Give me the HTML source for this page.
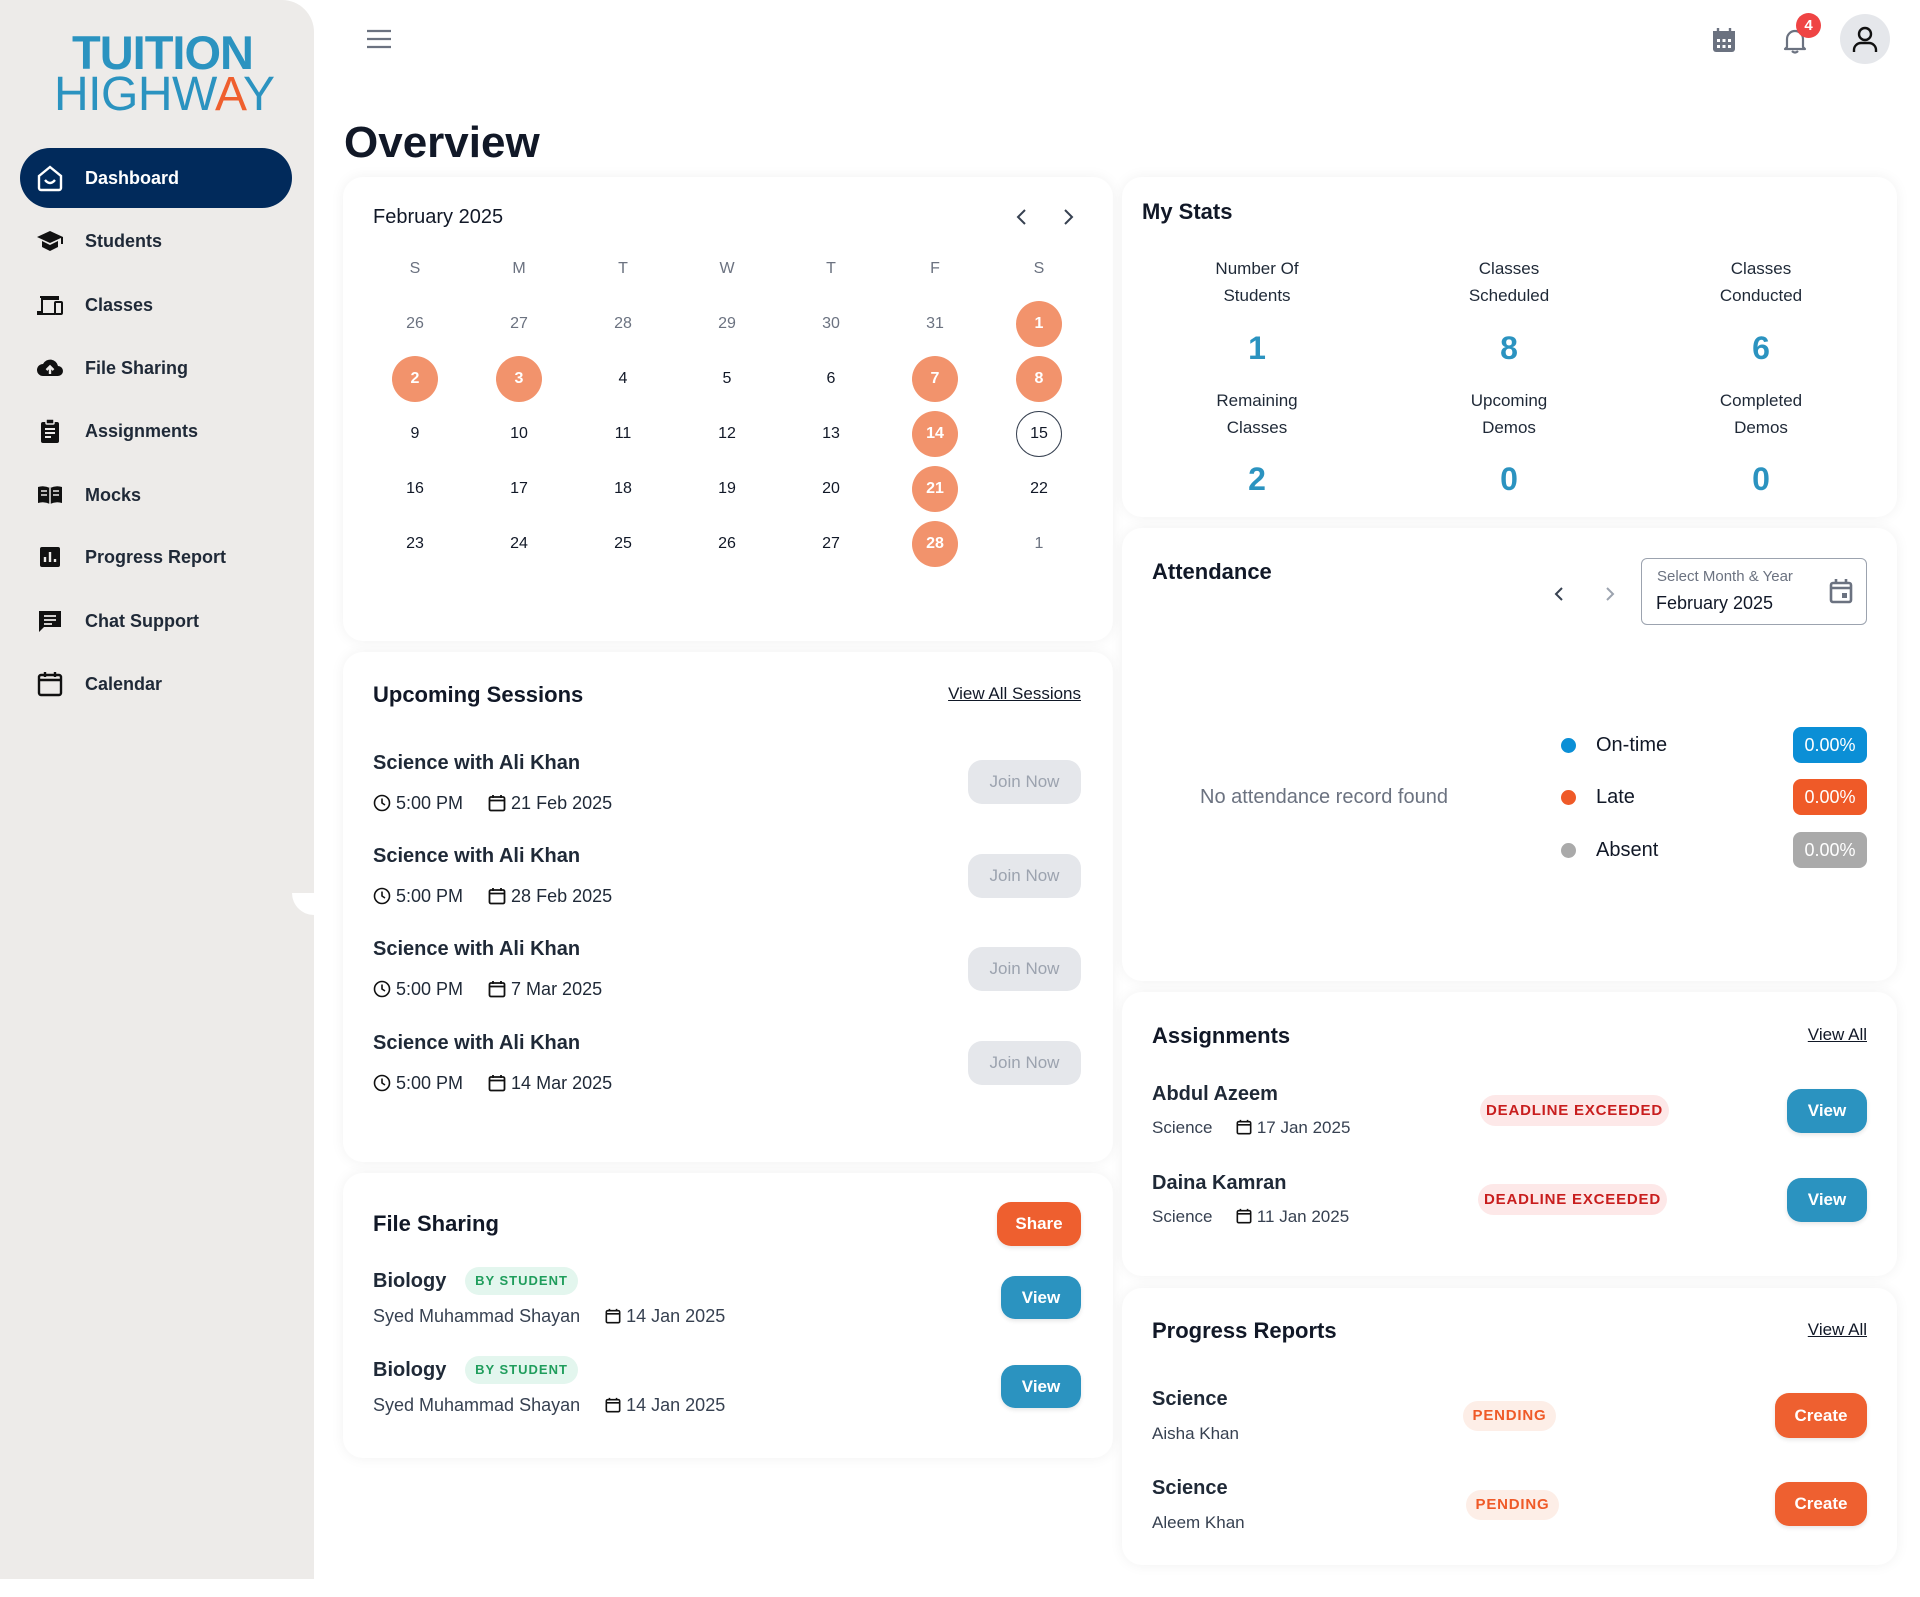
<!DOCTYPE html>
<html><head><meta charset="utf-8"><style>
*{margin:0;padding:0;box-sizing:border-box}
body{width:1920px;height:1597px;background:#fff;font-family:"Liberation Sans",sans-serif;color:#1f2937;position:relative;overflow:hidden}
.a{position:absolute;white-space:nowrap}
.card{position:absolute;background:#fff;border-radius:20px;box-shadow:0 0 14px rgba(0,0,0,0.06)}
.nav{position:absolute;left:85px;font-size:18px;font-weight:bold;color:#1f2937;line-height:24px}
.ni{position:absolute;left:36px;width:28px;height:28px}
.c{position:absolute;width:46px;height:46px;margin-left:-23px;margin-top:-23px;border-radius:50%;text-align:center;line-height:46px;font-size:16px;color:#111827}
.o{background:#f2936c;color:#fff;font-weight:bold}
.g{color:#6b7280}
.h{font-size:22px;font-weight:bold;color:#111827;line-height:28px}
.btn{position:absolute;border-radius:14px;color:#fff;font-weight:bold;font-size:17px;text-align:center;box-shadow:0 2px 4px rgba(0,0,0,0.1)}
.lnk{font-size:17px;text-decoration:underline;color:#111827;line-height:22px}
.st{position:absolute;width:250px;margin-left:-125px;text-align:center;font-size:17px;line-height:27px;color:#1f2937}
.num{position:absolute;width:100px;margin-left:-50px;text-align:center;font-size:32px;font-weight:bold;color:#2b93c0;line-height:40px}
</style></head><body>
<!-- sidebar -->
<div style="position:absolute;left:0;top:0;width:314px;height:1579px;background:#edebe9;border-top-right-radius:32px"></div>
<div style="position:absolute;left:292px;top:893px;width:22px;height:22px;background:#fff;border-bottom-left-radius:22px"></div>
<div class="a" style="left:72px;top:28px;font-size:47px;font-weight:bold;color:#2b93c0;line-height:50px;letter-spacing:-1px">TUITION</div>
<div class="a" style="left:54px;top:70px;font-size:48px;color:#2b93c0;line-height:50px;letter-spacing:-0.5px">HIGHW<span style="color:#ef5f2e">A</span>Y</div>
<div style="position:absolute;left:20px;top:148px;width:272px;height:60px;background:#012a5b;border-radius:30px"></div>
<svg class="ni" style="top:164px" viewBox="0 0 28 28"><path d="M3 12L14 3l11 9v12a2 2 0 0 1-2 2H5a2 2 0 0 1-2-2z" fill="none" stroke="#fff" stroke-width="2.4"/><path d="M9 16q5 6 10 0" fill="none" stroke="#fff" stroke-width="2.4"/></svg>
<div class="nav" style="top:166px;color:#fff">Dashboard</div>
<svg class="ni" style="top:227px" viewBox="0 0 28 28"><path d="M1 10L14 4l13 6-13 6z" fill="#111"/><path d="M6 14v6l8 4 8-4v-6l-8 4z" fill="#111"/><path d="M26 10v7" stroke="#111" stroke-width="2"/></svg>
<div class="nav" style="top:229px">Students</div>
<svg class="ni" style="top:291px" viewBox="0 0 28 28"><path d="M4 6h18v2H6v13H2v2h17" fill="none" stroke="#111" stroke-width="2"/><rect x="19" y="11" width="7" height="12" rx="1" fill="none" stroke="#111" stroke-width="2"/></svg>
<div class="nav" style="top:293px">Classes</div>
<svg class="ni" style="top:354px" viewBox="0 0 28 28"><path d="M7 22a6 6 0 0 1 0-12 8 8 0 0 1 15 2 5 5 0 0 1 0 10z" fill="#111"/><path d="M14 20v-7M10.5 16l3.5-3.5 3.5 3.5" stroke="#edebe9" stroke-width="2.4" fill="none"/></svg>
<div class="nav" style="top:356px">File Sharing</div>
<svg class="ni" style="top:417px" viewBox="0 0 28 28"><rect x="5" y="5" width="18" height="21" rx="2" fill="#111"/><rect x="10" y="2" width="8" height="5" rx="1" fill="#111" stroke="#edebe9" stroke-width="1.5"/><path d="M9 12h10M9 16h10M9 20h6" stroke="#edebe9" stroke-width="2"/></svg>
<div class="nav" style="top:419px">Assignments</div>
<svg class="ni" style="top:481px" viewBox="0 0 28 28"><path d="M2 6q6-2 12 1 6-3 12-1v16q-6-2-12 1-6-3-12-1z" fill="#111"/><path d="M14 7v16M5 10h6M5 14h6M17 10h6M17 14h6" stroke="#edebe9" stroke-width="1.5"/></svg>
<div class="nav" style="top:483px">Mocks</div>
<svg class="ni" style="top:543px" viewBox="0 0 28 28"><rect x="4" y="4" width="20" height="20" rx="2" fill="#111"/><path d="M9 19v-5M14 19V9M19 19v-3" stroke="#edebe9" stroke-width="2.4"/></svg>
<div class="nav" style="top:545px">Progress Report</div>
<svg class="ni" style="top:607px" viewBox="0 0 28 28"><path d="M3 4h22v16H8l-5 5z" fill="#111"/><path d="M8 9h12M8 13h12M8 17h8" stroke="#edebe9" stroke-width="1.8"/></svg>
<div class="nav" style="top:609px">Chat Support</div>
<svg class="ni" style="top:670px" viewBox="0 0 28 28"><rect x="3" y="5" width="22" height="20" rx="2" fill="none" stroke="#111" stroke-width="2.4"/><path d="M3 10h22M9 2v5M19 2v5" stroke="#111" stroke-width="2.4"/></svg>
<div class="nav" style="top:672px">Calendar</div>

<!-- top bar -->
<svg style="position:absolute;left:366px;top:28px" width="26" height="22" viewBox="0 0 26 22"><path d="M1 3h24M1 11h24M1 19h24" stroke="#6b7280" stroke-width="2.2"/></svg>
<svg style="position:absolute;left:1712px;top:27px" width="24" height="26" viewBox="0 0 24 26"><rect x="1" y="4" width="22" height="21" rx="3" fill="#6b7280"/><path d="M6 1v5M18 1v5" stroke="#6b7280" stroke-width="2.4"/><rect x="1" y="4" width="22" height="5" fill="#6b7280"/><g fill="#fff"><rect x="5" y="12" width="3" height="3"/><rect x="10.5" y="12" width="3" height="3"/><rect x="16" y="12" width="3" height="3"/><rect x="5" y="18" width="3" height="3"/><rect x="10.5" y="18" width="3" height="3"/><rect x="16" y="18" width="3" height="3"/></g></svg>
<svg style="position:absolute;left:1781px;top:27px" width="28" height="28" viewBox="0 0 28 28"><path d="M6 20V12a8 8 0 0 1 16 0v8l2 2H4z" fill="none" stroke="#6b7280" stroke-width="2.2" stroke-linejoin="round"/><path d="M11 24q3 3 6 0" stroke="#6b7280" stroke-width="2.2" fill="none"/></svg>
<div style="position:absolute;left:1796px;top:13px;width:25px;height:25px;border-radius:50%;background:#ef4444;color:#fff;font-weight:bold;font-size:15px;text-align:center;line-height:25px">4</div>
<div style="position:absolute;left:1840px;top:14px;width:50px;height:50px;border-radius:50%;background:#e5e7eb"></div>
<svg style="position:absolute;left:1851px;top:25px" width="28" height="28" viewBox="0 0 28 28"><circle cx="14" cy="9" r="6" fill="none" stroke="#111" stroke-width="2.4"/><path d="M3 27v-2a7 7 0 0 1 7-7h8a7 7 0 0 1 7 7v2" fill="none" stroke="#111" stroke-width="2.4"/></svg>

<div class="a" style="left:344px;top:118px;font-size:44px;font-weight:bold;color:#111827;line-height:50px">Overview</div>

<!-- calendar card -->
<div class="card" style="left:343px;top:177px;width:770px;height:464px"></div>
<div class="a" style="left:373px;top:205px;font-size:20px;line-height:24px;color:#111827">February 2025</div>
<svg style="position:absolute;left:1014px;top:208px" width="60" height="18" viewBox="0 0 60 18"><path d="M11 2L4 9l7 7" fill="none" stroke="#374151" stroke-width="2"/><path d="M52 2l7 7-7 7" fill="none" stroke="#374151" stroke-width="2" transform="translate(-1 0)"/></svg>
<div style="position:absolute;left:0;top:0">
<div class="c g" style="left:415px;top:269px">S</div><div class="c g" style="left:519px;top:269px">M</div><div class="c g" style="left:623px;top:269px">T</div><div class="c g" style="left:727px;top:269px">W</div><div class="c g" style="left:831px;top:269px">T</div><div class="c g" style="left:935px;top:269px">F</div><div class="c g" style="left:1039px;top:269px">S</div>
<div class="c g" style="left:415px;top:324px">26</div><div class="c g" style="left:519px;top:324px">27</div><div class="c g" style="left:623px;top:324px">28</div><div class="c g" style="left:727px;top:324px">29</div><div class="c g" style="left:831px;top:324px">30</div><div class="c g" style="left:935px;top:324px">31</div><div class="c o" style="left:1039px;top:324px">1</div>
<div class="c o" style="left:415px;top:379px">2</div><div class="c o" style="left:519px;top:379px">3</div><div class="c" style="left:623px;top:379px">4</div><div class="c" style="left:727px;top:379px">5</div><div class="c" style="left:831px;top:379px">6</div><div class="c o" style="left:935px;top:379px">7</div><div class="c o" style="left:1039px;top:379px">8</div>
<div class="c" style="left:415px;top:434px">9</div><div class="c" style="left:519px;top:434px">10</div><div class="c" style="left:623px;top:434px">11</div><div class="c" style="left:727px;top:434px">12</div><div class="c" style="left:831px;top:434px">13</div><div class="c o" style="left:935px;top:434px">14</div><div class="c" style="left:1039px;top:434px;border:1px solid #374151;line-height:44px">15</div>
<div class="c" style="left:415px;top:489px">16</div><div class="c" style="left:519px;top:489px">17</div><div class="c" style="left:623px;top:489px">18</div><div class="c" style="left:727px;top:489px">19</div><div class="c" style="left:831px;top:489px">20</div><div class="c o" style="left:935px;top:489px">21</div><div class="c" style="left:1039px;top:489px">22</div>
<div class="c" style="left:415px;top:544px">23</div><div class="c" style="left:519px;top:544px">24</div><div class="c" style="left:623px;top:544px">25</div><div class="c" style="left:727px;top:544px">26</div><div class="c" style="left:831px;top:544px">27</div><div class="c o" style="left:935px;top:544px">28</div><div class="c g" style="left:1039px;top:544px">1</div>
</div>

<!-- upcoming sessions -->
<div class="card" style="left:343px;top:652px;width:770px;height:510px"></div>
<div class="a h" style="left:373px;top:681px">Upcoming Sessions</div>
<div class="a lnk" style="right:839px;top:683px">View All Sessions</div>
<div id="sess"></div>
<script></script>
<!-- rows -->
<div class="a" style="left:373px;top:751px;font-size:20px;font-weight:bold;color:#1f2937;line-height:24px">Science with Ali Khan</div>
<div class="a" style="left:373px;top:792px;font-size:18px;line-height:22px;color:#1f2937"><svg width="18" height="18" viewBox="0 0 18 18" style="vertical-align:-3px"><circle cx="9" cy="9" r="7.5" fill="none" stroke="#111" stroke-width="1.6"/><path d="M9 4.5V9l3 2" fill="none" stroke="#111" stroke-width="1.6"/></svg> 5:00 PM &nbsp;&nbsp;&nbsp; <svg width="18" height="18" viewBox="0 0 18 18" style="vertical-align:-3px"><rect x="1.5" y="3" width="15" height="13.5" rx="1.5" fill="none" stroke="#111" stroke-width="1.8"/><path d="M1.5 6.5h15M5 1v3M13 1v3" stroke="#111" stroke-width="1.8"/></svg> 21 Feb 2025</div>
<div class="btn" style="left:968px;top:760px;width:113px;height:44px;line-height:44px;background:#e5e7eb;color:#9ca3af;font-weight:normal;box-shadow:none">Join Now</div>

<div class="a" style="left:373px;top:844px;font-size:20px;font-weight:bold;color:#1f2937;line-height:24px">Science with Ali Khan</div>
<div class="a" style="left:373px;top:885px;font-size:18px;line-height:22px;color:#1f2937"><svg width="18" height="18" viewBox="0 0 18 18" style="vertical-align:-3px"><circle cx="9" cy="9" r="7.5" fill="none" stroke="#111" stroke-width="1.6"/><path d="M9 4.5V9l3 2" fill="none" stroke="#111" stroke-width="1.6"/></svg> 5:00 PM &nbsp;&nbsp;&nbsp; <svg width="18" height="18" viewBox="0 0 18 18" style="vertical-align:-3px"><rect x="1.5" y="3" width="15" height="13.5" rx="1.5" fill="none" stroke="#111" stroke-width="1.8"/><path d="M1.5 6.5h15M5 1v3M13 1v3" stroke="#111" stroke-width="1.8"/></svg> 28 Feb 2025</div>
<div class="btn" style="left:968px;top:854px;width:113px;height:44px;line-height:44px;background:#e5e7eb;color:#9ca3af;font-weight:normal;box-shadow:none">Join Now</div>

<div class="a" style="left:373px;top:937px;font-size:20px;font-weight:bold;color:#1f2937;line-height:24px">Science with Ali Khan</div>
<div class="a" style="left:373px;top:978px;font-size:18px;line-height:22px;color:#1f2937"><svg width="18" height="18" viewBox="0 0 18 18" style="vertical-align:-3px"><circle cx="9" cy="9" r="7.5" fill="none" stroke="#111" stroke-width="1.6"/><path d="M9 4.5V9l3 2" fill="none" stroke="#111" stroke-width="1.6"/></svg> 5:00 PM &nbsp;&nbsp;&nbsp; <svg width="18" height="18" viewBox="0 0 18 18" style="vertical-align:-3px"><rect x="1.5" y="3" width="15" height="13.5" rx="1.5" fill="none" stroke="#111" stroke-width="1.8"/><path d="M1.5 6.5h15M5 1v3M13 1v3" stroke="#111" stroke-width="1.8"/></svg> 7 Mar 2025</div>
<div class="btn" style="left:968px;top:947px;width:113px;height:44px;line-height:44px;background:#e5e7eb;color:#9ca3af;font-weight:normal;box-shadow:none">Join Now</div>

<div class="a" style="left:373px;top:1031px;font-size:20px;font-weight:bold;color:#1f2937;line-height:24px">Science with Ali Khan</div>
<div class="a" style="left:373px;top:1072px;font-size:18px;line-height:22px;color:#1f2937"><svg width="18" height="18" viewBox="0 0 18 18" style="vertical-align:-3px"><circle cx="9" cy="9" r="7.5" fill="none" stroke="#111" stroke-width="1.6"/><path d="M9 4.5V9l3 2" fill="none" stroke="#111" stroke-width="1.6"/></svg> 5:00 PM &nbsp;&nbsp;&nbsp; <svg width="18" height="18" viewBox="0 0 18 18" style="vertical-align:-3px"><rect x="1.5" y="3" width="15" height="13.5" rx="1.5" fill="none" stroke="#111" stroke-width="1.8"/><path d="M1.5 6.5h15M5 1v3M13 1v3" stroke="#111" stroke-width="1.8"/></svg> 14 Mar 2025</div>
<div class="btn" style="left:968px;top:1041px;width:113px;height:44px;line-height:44px;background:#e5e7eb;color:#9ca3af;font-weight:normal;box-shadow:none">Join Now</div>

<!-- file sharing -->
<div class="card" style="left:343px;top:1173px;width:770px;height:285px"></div>
<div class="a h" style="left:373px;top:1210px">File Sharing</div>
<div class="btn" style="left:997px;top:1202px;width:84px;height:44px;line-height:44px;background:#ee5f2f">Share</div>
<div class="a" style="left:373px;top:1269px;font-size:20px;font-weight:bold;line-height:24px;color:#1f2937">Biology</div>
<div class="a" style="left:465px;top:1267px;width:113px;height:28px;border-radius:14px;background:#e3f6ee;color:#1f9d5c;font-size:13px;font-weight:bold;letter-spacing:1px;text-align:center;line-height:28px">BY STUDENT</div>
<div class="a" style="left:373px;top:1305px;font-size:18px;line-height:22px;color:#374151">Syed Muhammad Shayan &nbsp;&nbsp;&nbsp; <svg width="16" height="16" viewBox="0 0 18 18" style="vertical-align:-2px"><rect x="1.5" y="3" width="15" height="13.5" rx="1.5" fill="none" stroke="#111" stroke-width="1.8"/><path d="M1.5 6.5h15M5 1v3M13 1v3" stroke="#111" stroke-width="1.8"/></svg> 14 Jan 2025</div>
<div class="btn" style="left:1001px;top:1276px;width:80px;height:43px;line-height:43px;background:#2b93c0">View</div>
<div class="a" style="left:373px;top:1358px;font-size:20px;font-weight:bold;line-height:24px;color:#1f2937">Biology</div>
<div class="a" style="left:465px;top:1356px;width:113px;height:28px;border-radius:14px;background:#e3f6ee;color:#1f9d5c;font-size:13px;font-weight:bold;letter-spacing:1px;text-align:center;line-height:28px">BY STUDENT</div>
<div class="a" style="left:373px;top:1394px;font-size:18px;line-height:22px;color:#374151">Syed Muhammad Shayan &nbsp;&nbsp;&nbsp; <svg width="16" height="16" viewBox="0 0 18 18" style="vertical-align:-2px"><rect x="1.5" y="3" width="15" height="13.5" rx="1.5" fill="none" stroke="#111" stroke-width="1.8"/><path d="M1.5 6.5h15M5 1v3M13 1v3" stroke="#111" stroke-width="1.8"/></svg> 14 Jan 2025</div>
<div class="btn" style="left:1001px;top:1365px;width:80px;height:43px;line-height:43px;background:#2b93c0">View</div>

<!-- my stats -->
<div class="card" style="left:1122px;top:177px;width:775px;height:340px"></div>
<div class="a h" style="left:1142px;top:198px">My Stats</div>
<div class="st" style="left:1257px;top:255px">Number Of<br>Students</div>
<div class="st" style="left:1509px;top:255px">Classes<br>Scheduled</div>
<div class="st" style="left:1761px;top:255px">Classes<br>Conducted</div>
<div class="num" style="left:1257px;top:328px">1</div><div class="num" style="left:1509px;top:328px">8</div><div class="num" style="left:1761px;top:328px">6</div>
<div class="st" style="left:1257px;top:387px">Remaining<br>Classes</div>
<div class="st" style="left:1509px;top:387px">Upcoming<br>Demos</div>
<div class="st" style="left:1761px;top:387px">Completed<br>Demos</div>
<div class="num" style="left:1257px;top:459px">2</div><div class="num" style="left:1509px;top:459px">0</div><div class="num" style="left:1761px;top:459px">0</div>

<!-- attendance -->
<div class="card" style="left:1122px;top:528px;width:775px;height:453px"></div>
<div class="a h" style="left:1152px;top:558px">Attendance</div>
<svg style="position:absolute;left:1550px;top:586px" width="70" height="16" viewBox="0 0 70 16"><path d="M12 2L6 8l6 6" fill="none" stroke="#374151" stroke-width="2"/><path d="M57 2l6 6-6 6" fill="none" stroke="#9ca3af" stroke-width="2"/></svg>
<div style="position:absolute;left:1641px;top:558px;width:226px;height:67px;border:1px solid #9ca3af;border-radius:6px"></div>
<div class="a" style="left:1657px;top:568px;font-size:15px;color:#6b7280;line-height:18px">Select Month &amp; Year</div>
<div class="a" style="left:1656px;top:592px;font-size:18px;color:#111827;line-height:22px">February 2025</div>
<svg style="position:absolute;left:1829px;top:578px" width="24" height="26" viewBox="0 0 24 26"><rect x="2" y="5" width="20" height="19" rx="2" fill="none" stroke="#6b7280" stroke-width="2.6"/><path d="M2 10h20M7 1v5M17 1v5" stroke="#6b7280" stroke-width="2.6"/><rect x="13" y="15" width="5" height="5" fill="#6b7280"/></svg>
<div class="a" style="left:1200px;top:785px;font-size:20px;font-weight:bold;color:#6b7280;line-height:24px;font-weight:500">No attendance record found</div>
<div style="position:absolute;left:1561px;top:738px;width:15px;height:15px;border-radius:50%;background:#0b8fd6"></div>
<div style="position:absolute;left:1561px;top:790px;width:15px;height:15px;border-radius:50%;background:#ef5a28"></div>
<div style="position:absolute;left:1561px;top:843px;width:15px;height:15px;border-radius:50%;background:#aaa"></div>
<div class="a" style="left:1596px;top:733px;font-size:20px;line-height:24px;color:#111827">On-time</div>
<div class="a" style="left:1596px;top:785px;font-size:20px;line-height:24px;color:#111827">Late</div>
<div class="a" style="left:1596px;top:838px;font-size:20px;line-height:24px;color:#111827">Absent</div>
<div class="a" style="left:1793px;top:727px;width:74px;height:36px;border-radius:8px;background:#0b8fd6;color:#fff;font-size:18px;text-align:center;line-height:36px">0.00%</div>
<div class="a" style="left:1793px;top:779px;width:74px;height:36px;border-radius:8px;background:#ef5a28;color:#fff;font-size:18px;text-align:center;line-height:36px">0.00%</div>
<div class="a" style="left:1793px;top:832px;width:74px;height:36px;border-radius:8px;background:#aaa;color:#fff;font-size:18px;text-align:center;line-height:36px">0.00%</div>

<!-- assignments -->
<div class="card" style="left:1122px;top:992px;width:775px;height:284px"></div>
<div class="a h" style="left:1152px;top:1022px">Assignments</div>
<div class="a lnk" style="right:53px;top:1024px">View All</div>
<div class="a" style="left:1152px;top:1082px;font-size:20px;font-weight:bold;line-height:24px;color:#1f2937">Abdul Azeem</div>
<div class="a" style="left:1152px;top:1117px;font-size:17px;line-height:22px;color:#374151">Science &nbsp;&nbsp;&nbsp; <svg width="16" height="16" viewBox="0 0 18 18" style="vertical-align:-2px"><rect x="1.5" y="3" width="15" height="13.5" rx="1.5" fill="none" stroke="#111" stroke-width="1.8"/><path d="M1.5 6.5h15M5 1v3M13 1v3" stroke="#111" stroke-width="1.8"/></svg> 17 Jan 2025</div>
<div class="a" style="left:1480px;top:1095px;width:189px;height:31px;border-radius:16px;background:#fde8e8;color:#c81e1e;font-size:15px;font-weight:bold;letter-spacing:0.8px;text-align:center;line-height:31px">DEADLINE EXCEEDED</div>
<div class="btn" style="left:1787px;top:1089px;width:80px;height:44px;line-height:44px;background:#2b93c0">View</div>
<div class="a" style="left:1152px;top:1171px;font-size:20px;font-weight:bold;line-height:24px;color:#1f2937">Daina Kamran</div>
<div class="a" style="left:1152px;top:1206px;font-size:17px;line-height:22px;color:#374151">Science &nbsp;&nbsp;&nbsp; <svg width="16" height="16" viewBox="0 0 18 18" style="vertical-align:-2px"><rect x="1.5" y="3" width="15" height="13.5" rx="1.5" fill="none" stroke="#111" stroke-width="1.8"/><path d="M1.5 6.5h15M5 1v3M13 1v3" stroke="#111" stroke-width="1.8"/></svg> 11 Jan 2025</div>
<div class="a" style="left:1478px;top:1184px;width:189px;height:31px;border-radius:16px;background:#fde8e8;color:#c81e1e;font-size:15px;font-weight:bold;letter-spacing:0.8px;text-align:center;line-height:31px">DEADLINE EXCEEDED</div>
<div class="btn" style="left:1787px;top:1178px;width:80px;height:44px;line-height:44px;background:#2b93c0">View</div>

<!-- progress reports -->
<div class="card" style="left:1122px;top:1288px;width:775px;height:277px"></div>
<div class="a h" style="left:1152px;top:1317px">Progress Reports</div>
<div class="a lnk" style="right:53px;top:1319px">View All</div>
<div class="a" style="left:1152px;top:1387px;font-size:20px;font-weight:bold;line-height:24px;color:#1f2937">Science</div>
<div class="a" style="left:1152px;top:1423px;font-size:17px;line-height:22px;color:#374151">Aisha Khan</div>
<div class="a" style="left:1463px;top:1401px;width:93px;height:30px;border-radius:15px;background:#fdeee7;color:#ef5a28;font-size:15px;font-weight:bold;letter-spacing:0.8px;text-align:center;line-height:30px">PENDING</div>
<div class="btn" style="left:1775px;top:1393px;width:92px;height:45px;line-height:45px;background:#ee6030">Create</div>
<div class="a" style="left:1152px;top:1476px;font-size:20px;font-weight:bold;line-height:24px;color:#1f2937">Science</div>
<div class="a" style="left:1152px;top:1512px;font-size:17px;line-height:22px;color:#374151">Aleem Khan</div>
<div class="a" style="left:1466px;top:1490px;width:93px;height:30px;border-radius:15px;background:#fdeee7;color:#ef5a28;font-size:15px;font-weight:bold;letter-spacing:0.8px;text-align:center;line-height:30px">PENDING</div>
<div class="btn" style="left:1775px;top:1482px;width:92px;height:44px;line-height:44px;background:#ee6030">Create</div>
</body></html>
